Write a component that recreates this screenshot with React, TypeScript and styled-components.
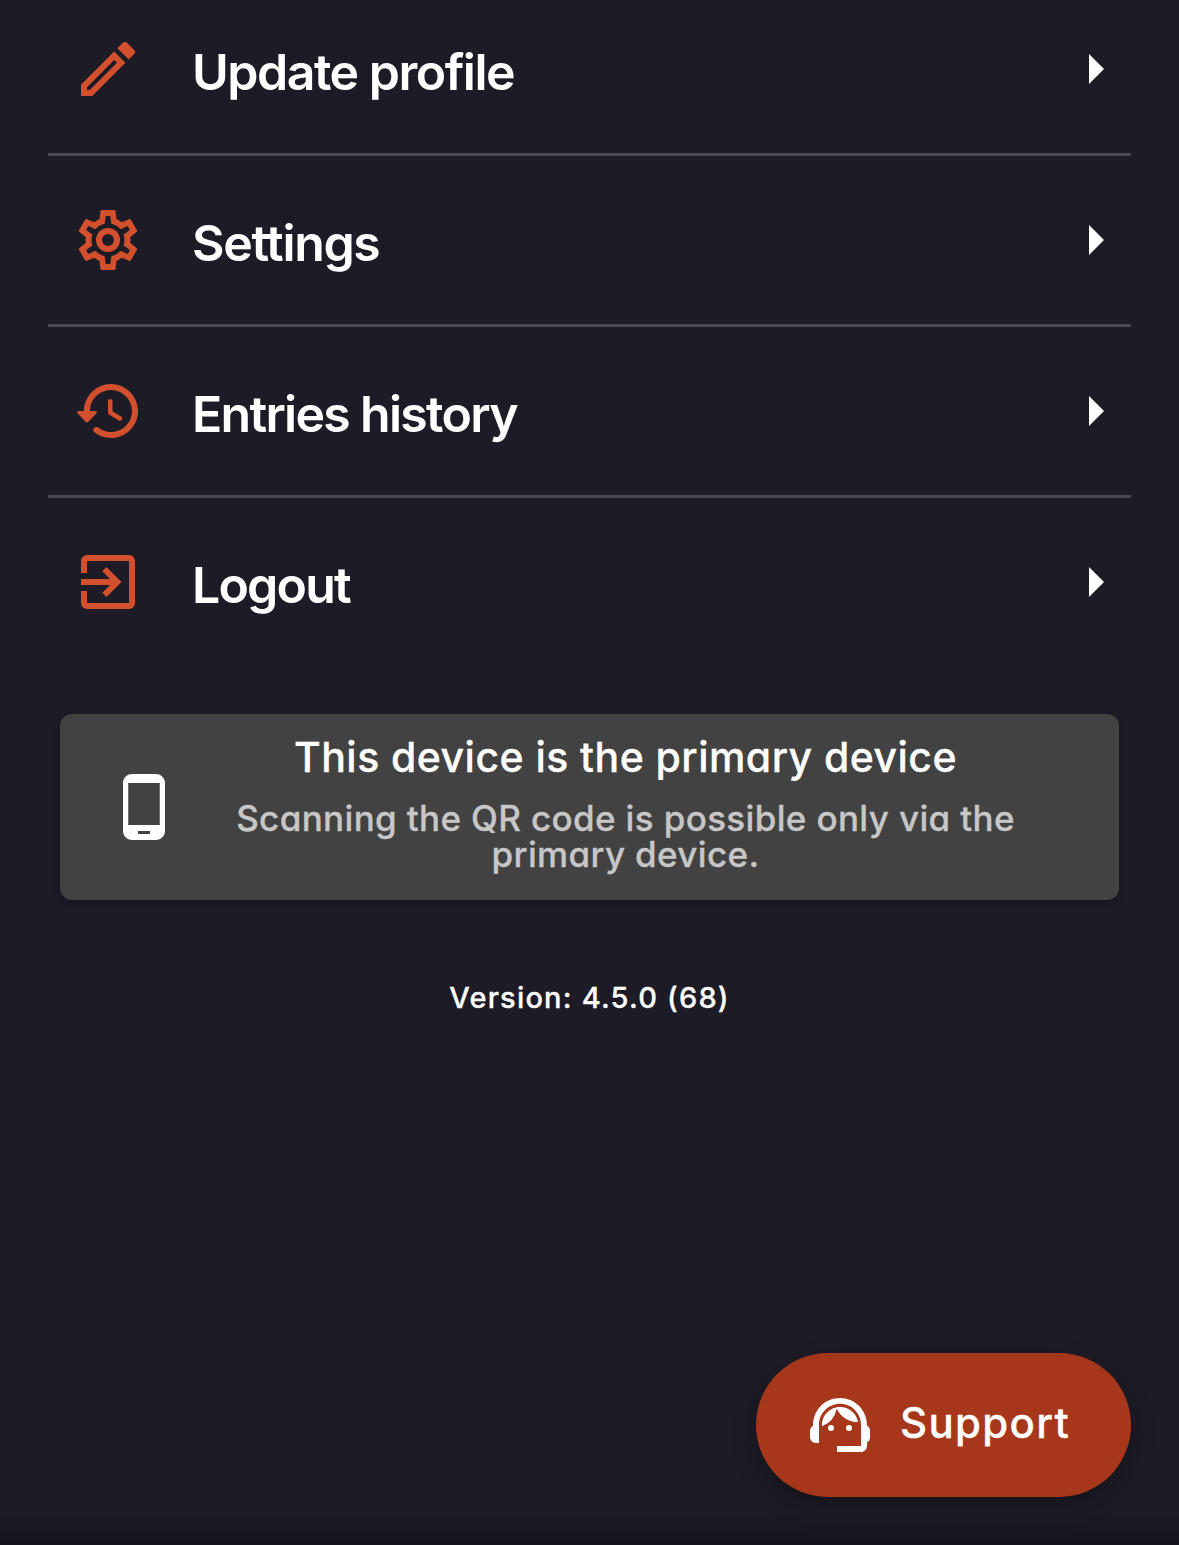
import React from "react";
import styled, { createGlobalStyle } from "styled-components";
import {
  MdArrowRight,
  MdExitToApp,
  MdOutlineEdit,
  MdPhoneAndroid,
  MdSupportAgent,
} from "react-icons/md";

const GlobalStyle = createGlobalStyle`
  *, *::before, *::after { box-sizing: border-box; }
  body {
    margin: 0;
    background: #1d1b26;
    color: #ffffff;
    font-family: Inter, "Liberation Sans", sans-serif;
  }
`;

const Screen = styled.main`
  display: flex;
  flex-direction: column;
  width: 1179px;
  height: 1545px;
  overflow: hidden;
  background: linear-gradient(to bottom, rgba(22, 19, 28, 0) 1512px, #16131c 1545px), #1d1b26;
`;

const Menu = styled.nav`
  display: flex;
  flex-direction: column;
  flex: none;
  margin: -15px 48px 0;
`;

const MenuRow = styled.a`
  display: flex;
  align-items: center;
  height: 168px;
  padding-left: 24px;
  box-sizing: content-box;

  & + & {
    border-top: 3px solid #4a4950;
  }
`;

const MenuIcon = styled.span`
  display: flex;
  flex: none;
  width: 72px;
  height: 72px;
  color: #d2502e;
`;

const MenuLabel = styled.span<{ $tracking: number }>`
  flex: 1;
  padding: 6px 0 0 48px;
  font-size: 50px;
  font-weight: 600;
  line-height: 60px;
  letter-spacing: ${(p) => p.$tracking}px;
  white-space: nowrap;
`;

const DeviceCard = styled.section`
  display: flex;
  align-items: center;
  flex: none;
  height: 186px;
  margin: 48px 60px 0;
  padding: 0 48px;
  border-radius: 12px;
  background: #424242;
  box-shadow: 0 3px 6px rgba(0, 0, 0, 0.25);
`;

const DeviceText = styled.div`
  display: flex;
  flex: 1;
  flex-direction: column;
  gap: 18px;
  padding-bottom: 10px;
  text-align: center;
  font-weight: 500;
  font-feature-settings: "cv11";
`;

const DeviceTitle = styled.h2`
  margin: 0;
  font-size: 41px;
  font-weight: 500;
  line-height: 50px;
  letter-spacing: 0.45px;
  -webkit-text-stroke: 0.3px currentColor;
`;

const DeviceNote = styled.p`
  margin: 0;
  color: #c7c7c7;
  font-size: 35px;
  line-height: 36px;
  letter-spacing: 0.35px;
  -webkit-text-stroke: 0.3px currentColor;
`;

const Version = styled.p`
  flex: none;
  margin: 78px 0 0;
  text-align: center;
  font-size: 29px;
  font-weight: 500;
  line-height: 40px;
  letter-spacing: 1.2px;
  -webkit-text-stroke: 0.3px currentColor;
`;

const SupportButton = styled.button`
  display: flex;
  align-items: center;
  align-self: flex-end;
  flex: none;
  width: 375px;
  height: 144px;
  margin: auto 48px 48px 0;
  padding: 0 0 0 48px;
  border: 0;
  border-radius: 72px;
  background: #a6371a;
  color: #ffffff;
  font: inherit;
  box-shadow: 0 9px 24px rgba(0, 0, 0, 0.28);
`;

const SupportLabel = styled.span`
  padding: 0 0 4px 24px;
  font-size: 42px;
  font-weight: 500;
  line-height: 50px;
  letter-spacing: 1.3px;
  -webkit-text-stroke: 0.3px currentColor;
`;

const SettingsIcon = () => (
  <svg width="72" height="72" viewBox="0 0 24 24" fill="currentColor">
    <path d="M12 8a4 4 0 0 1 4 4 4 4 0 0 1-4 4 4 4 0 0 1-4-4 4 4 0 0 1 4-4m0 2a2 2 0 0 0-2 2 2 2 0 0 0 2 2 2 2 0 0 0 2-2 2 2 0 0 0-2-2m-2 12c-.25 0-.46-.18-.5-.42l-.37-2.65c-.63-.25-1.17-.59-1.69-.99l-2.49 1.01c-.22.08-.49 0-.61-.22l-2-3.46a.493.493 0 0 1 .12-.64l2.11-1.66L4.5 12l.07-1-2.11-1.63a.493.493 0 0 1-.12-.64l2-3.46c.12-.22.39-.31.61-.22l2.49 1c.52-.39 1.06-.73 1.69-.98l.37-2.65c.04-.24.25-.42.5-.42h4c.25 0 .46.18.5.42l.37 2.65c.63.25 1.17.59 1.69.98l2.49-1c.22-.09.49 0 .61.22l2 3.46c.13.22.07.49-.12.64L19.43 11l.07 1-.07 1 2.11 1.63c.19.15.25.42.12.64l-2 3.46c-.12.22-.39.31-.61.22l-2.49-1c-.52.39-1.06.73-1.69.98l-.37 2.65c-.04.24-.25.42-.5.42h-4m1.25-18-.37 2.61c-1.2.25-2.26.89-3.03 1.78L5.44 7.35l-.75 1.3L6.8 10.2a5.55 5.55 0 0 0 0 3.6l-2.12 1.56.75 1.3 2.43-1.04c.77.88 1.82 1.52 3.01 1.76l.37 2.62h1.52l.37-2.61c1.19-.25 2.24-.89 3.01-1.77l2.43 1.04.75-1.3-2.12-1.55c.4-1.17.4-2.44 0-3.61l2.11-1.55-.75-1.3-2.41 1.04a5.42 5.42 0 0 0-3.03-1.77L12.75 4h-1.5z" />
  </svg>
);

const HistoryIcon = () => (
  <svg width="72" height="72" viewBox="0 0 24 24" fill="currentColor">
    <path d="M13.26 3C8.17 2.86 4 6.95 4 12H2.21c-.45 0-.67.54-.35.85l2.79 2.8c.2.2.51.2.71 0l2.79-2.8c.31-.31.09-.85-.36-.85H6c0-3.9 3.18-7.05 7.1-7 3.72.05 6.85 3.18 6.9 6.9.05 3.91-3.1 7.1-7 7.1-1.61 0-3.1-.55-4.28-1.48-.4-.31-.96-.28-1.32.08-.42.42-.39 1.13.08 1.49C9 20.29 10.91 21 13 21c5.05 0 9.14-4.17 9-9.26-.13-4.69-4.05-8.61-8.74-8.74zm-.51 5c-.41 0-.75.34-.75.75v3.68c0 .35.19.68.49.86l3.12 1.85c.36.21.82.09 1.03-.26.21-.36.09-.82-.26-1.03l-2.88-1.71v-3.4c0-.4-.34-.74-.75-.74z" />
  </svg>
);

const items = [
  { label: "Update profile", tracking: -1.5, icon: <MdOutlineEdit size={72} /> },
  { label: "Settings", tracking: -1.35, icon: <SettingsIcon /> },
  { label: "Entries history", tracking: -1.7, icon: <HistoryIcon /> },
  { label: "Logout", tracking: -1.8, icon: <MdExitToApp size={72} /> },
];

export default function App() {
  return (
    <Screen>
      <GlobalStyle />
      <Menu>
        {items.map((item) => (
          <MenuRow key={item.label}>
            <MenuIcon>{item.icon}</MenuIcon>
            <MenuLabel $tracking={item.tracking}>{item.label}</MenuLabel>
            <MdArrowRight size={72} />
          </MenuRow>
        ))}
      </Menu>
      <DeviceCard>
        <MdPhoneAndroid size={72} />
        <DeviceText>
          <DeviceTitle>This device is the primary device</DeviceTitle>
          <DeviceNote>
            Scanning the QR code is possible only via the primary device.
          </DeviceNote>
        </DeviceText>
      </DeviceCard>
      <Version>Version: 4.5.0 (68)</Version>
      <SupportButton>
        <MdSupportAgent size={72} />
        <SupportLabel>Support</SupportLabel>
      </SupportButton>
    </Screen>
  );
}
